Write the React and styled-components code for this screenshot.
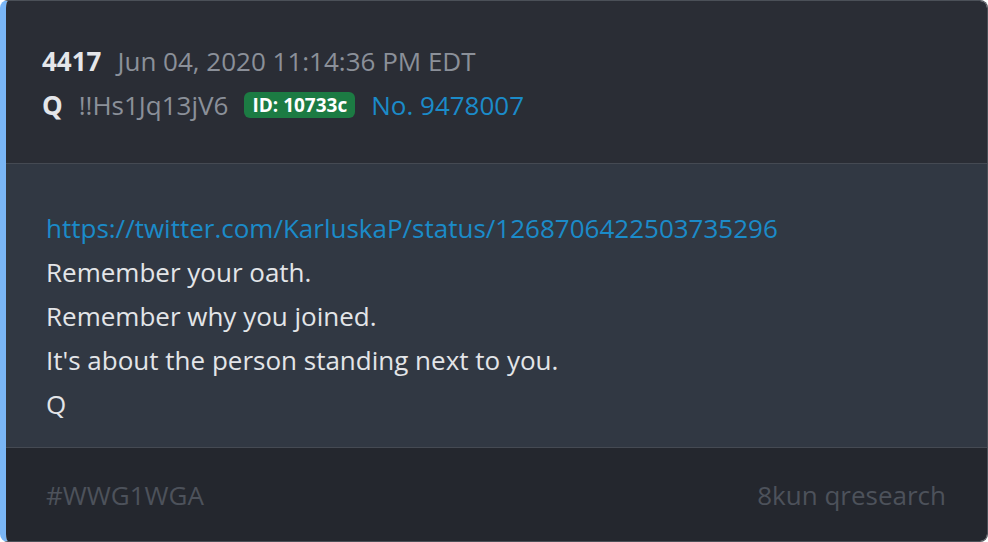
import React from 'react';
import styled, { createGlobalStyle } from 'styled-components';

const GlobalStyle = createGlobalStyle`
  html, body {
    margin: 0;
    padding: 0;
    background: #ffffff;
  }
  * {
    box-sizing: border-box;
  }
`;

const Card = styled.div`
  width: 988px;
  height: 542px;
  display: grid;
  grid-template-rows: 163px 284px 1fr;
  border: 1px solid #4b5058;
  border-left: 6px solid #7ab6f6;
  border-radius: 8px;
  overflow: hidden;
  font-family: 'Open Sans', 'Liberation Sans', sans-serif;
`;

const Header = styled.header`
  background: #2a2d35;
  border-bottom: 1px solid #454a53;
  padding: 38px 0 0 36px;
  display: flex;
  flex-direction: column;
`;

const Line = styled.div`
  display: flex;
  align-items: center;
  gap: 16px;
  height: 44px;
  font-size: 26px;
  color: #8b9099;
`;

const Strong = styled.span`
  font-weight: 700;
  color: #e4e6ea;
`;

const Badge = styled.span`
  background: #1c7b43;
  color: #ffffff;
  font-weight: 700;
  font-size: 19px;
  border-radius: 6px;
  padding: 1px 8px 1px;
  line-height: 24px;
`;

const Link = styled.a`
  color: #1b8bc9;
  text-decoration: none;
`;

const Body = styled.main`
  background: #313843;
  border-bottom: 1px solid #454a53;
  padding: 42px 0 0 40px;
  font-size: 26px;
  line-height: 44px;
  color: #e3e5e8;
`;

const Footer = styled.footer`
  background: #24272e;
  display: flex;
  justify-content: space-between;
  align-items: center;
  padding: 0 41px 0 40px;
  font-size: 26px;
  color: #4d525b;
`;

export default function App() {
  return (
    <>
      <GlobalStyle />
      <Card>
        <Header>
          <Line>
            <Strong>4417</Strong>
            <span>Jun 04, 2020 11:14:36 PM EDT</span>
          </Line>
          <Line>
            <Strong>Q</Strong>
            <span>!!Hs1Jq13jV6</span>
            <Badge>ID: 10733c</Badge>
            <Link>No. 9478007</Link>
          </Line>
        </Header>
        <Body>
          <div><Link>https://twitter.com/KarluskaP/status/1268706422503735296</Link></div>
          <div>Remember your oath.</div>
          <div>Remember why you joined.</div>
          <div>It's about the person standing next to you.</div>
          <div>Q</div>
        </Body>
        <Footer>
          <span>#WWG1WGA</span>
          <span>8kun qresearch</span>
        </Footer>
      </Card>
    </>
  );
}
